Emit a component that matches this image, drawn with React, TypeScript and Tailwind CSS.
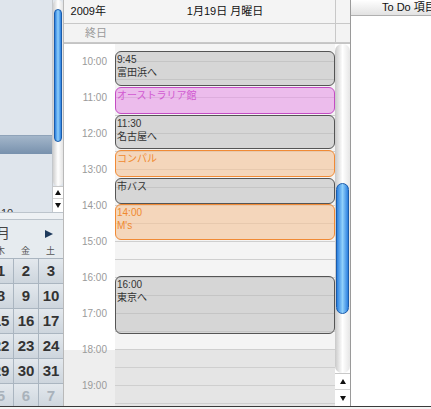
import React from "react";

const font = "font-['Liberation_Sans','Noto_Sans_CJK_JP',sans-serif]";

const EVENT_STYLES = {
  gray: "bg-[rgba(190,190,190,0.55)] border-[#555] text-[#333]",
  pink: "bg-[rgba(230,150,230,0.6)] border-[#c34cc3] text-[#d15ad1]",
  orange: "bg-[rgba(245,198,156,0.65)] border-[#f08a35] text-[#f08a30]",
};

const events = [
  { top: 7, h: 35, kind: "gray", lines: ["9:45", "富田浜へ"] },
  { top: 43, h: 27, kind: "pink", lines: ["オーストラリア館"] },
  { top: 71, h: 34, kind: "gray", lines: ["11:30", "名古屋へ"] },
  { top: 106, h: 27, kind: "orange", lines: ["コンパル"] },
  { top: 134, h: 26, kind: "gray", lines: ["市バス"] },
  { top: 160, h: 36, kind: "orange", lines: ["14:00", "M's"] },
  { top: 232, h: 58, kind: "gray", lines: ["16:00", "東京へ"] },
];

const hours = ["10:00", "11:00", "12:00", "13:00", "14:00", "15:00", "16:00", "17:00", "18:00", "19:00"];

// January 2009, weeks start on Sunday
const weeks = [
  [28, 29, 30, 31, 1, 2, 3],
  [4, 5, 6, 7, 8, 9, 10],
  [11, 12, 13, 14, 15, 16, 17],
  [18, 19, 20, 21, 22, 23, 24],
  [25, 26, 27, 28, 29, 30, 31],
  [1, 2, 3, 4, 5, 6, 7],
];

function UpArrow() {
  return (
    <svg width="6" height="5" viewBox="0 0 6 5">
      <polygon points="3,0 6,5 0,5" fill="#111" />
    </svg>
  );
}

function DownArrow() {
  return (
    <svg width="6" height="5" viewBox="0 0 6 5">
      <polygon points="0,0 6,0 3,5" fill="#111" />
    </svg>
  );
}

function Event({ top, h, kind, lines }) {
  return (
    <div
      className={`absolute left-0 right-0 border rounded-[6px] pl-[1px] pt-[1px] text-[10px] leading-[13px] overflow-hidden ${EVENT_STYLES[kind]}`}
      style={{ top, height: h }}
    >
      {lines.map((l) => (
        <div key={l} className="whitespace-nowrap">{l}</div>
      ))}
    </div>
  );
}

function MiniCalendar() {
  return (
    <div className="flex-1 overflow-hidden bg-[#e6ebef]">
      <div className="w-[175px] ml-[-112px]">
        <div className="h-[24px] pt-[3px] flex items-center">
          <span className="w-[122px] text-right text-[14px] text-[#444]">2009年1月</span>
          <span className="ml-auto mr-[10px] flex">
            <svg width="8" height="8" viewBox="0 0 8 8">
              <polygon points="0,0 8,4 0,8" fill="#1e3a5c" />
            </svg>
          </span>
        </div>
        <div className="h-[14px] flex text-[9px] text-[#555] leading-[14px]">
          {["日", "月", "火", "水", "木", "金", "土"].map((d) => (
            <div key={d} className="w-[25px] text-center">{d}</div>
          ))}
        </div>
        <div className="border-t border-[#aab5c0]">
          {weeks.map((w, wi) => (
            <div key={wi} className="flex h-[25px]">
              {w.map((d, di) => {
                const other = (wi === 0 && d > 20) || (wi === 5 && d < 15);
                return (
                  <div
                    key={di}
                    className={`w-[25px] h-[25px] pt-[1px] border-l border-b border-[#aab5c0] bg-gradient-to-b from-[#e3e8ed] to-[#cdd5dd] flex items-center justify-center text-[15px] font-bold ${other ? "text-[#a9b2bb]" : "text-[#333]"}`}
                  >
                    {d}
                  </div>
                );
              })}
            </div>
          ))}
        </div>
      </div>
    </div>
  );
}

export default function App() {
  return (
    <div className={`w-[431px] h-[409px] flex flex-col overflow-hidden bg-white ${font}`}>
      <div className="flex h-[406px]">
        {/* left: calendar list + mini month */}
        <div className="w-[63px] flex flex-col bg-[#dfe5ec]">
          <div className="h-[212px] flex">
            <div className="w-[52px] flex flex-col">
              <div className="h-[135px]" />
              <div className="h-[19px] border-t border-[#8fa3b9] bg-gradient-to-b from-[#a3b6ca] to-[#7891ad]" />
              <div className="flex-1" />
              <div className="h-[5px] overflow-hidden text-[11px] leading-[12px] text-[#333] pl-[1px]">10</div>
            </div>
            <div className="w-[11px] flex flex-col border-l border-[#c4c8cc]">
              <div className="h-[186px] rounded-t-full rounded-b-full bg-gradient-to-r from-[#cfcfcf] via-[#ffffff] to-[#e4e4e4] pt-[9px]">
                <div className="h-[133px] mx-[1px] rounded-full border border-[#1a5cab] bg-gradient-to-r from-[#2a7fde] via-[#8fd0fb] to-[#2a7fde]" />
              </div>
              <div className="flex-1 flex flex-col bg-white border-t border-[#c8c8c8]">
                <div className="h-[12px] flex items-center justify-center border-b border-[#d4d4d4]">
                  <UpArrow />
                </div>
                <div className="flex-1 flex items-center justify-center">
                  <DownArrow />
                </div>
              </div>
            </div>
          </div>
          <div className="h-[8px] bg-[#eef1f4] border-t border-[#a9b3bd] border-b border-[#bcc4cc]" />
          <MiniCalendar />
        </div>

        {/* day view */}
        <div className="w-[288px] flex flex-col border-l border-r border-l-[#b9b9b9] border-r-[#9a9a9a]">
          <div className="h-[24px] flex border-b border-[#c8c8c8] bg-[#f4f4f4] text-[11px] text-[#111]">
            <div className="w-[51px] flex items-center justify-end pr-[9px]">2009年</div>
            <div className="w-[220px] flex items-center justify-center">1月19日 月曜日</div>
            <div className="flex-1 border-l border-[#c8c8c8]" />
          </div>
          <div className="h-[19px] flex border-b border-[#c8c8c8] bg-[#f3f3f3] text-[11px] text-[#9a9a9a]">
            <div className="w-[51px] flex items-center justify-end pr-[8px]">終日</div>
            <div className="w-[220px]" />
            <div className="flex-1 border-l border-[#c8c8c8]" />
          </div>
          <div className="flex-1 flex border-t border-[#c4c4c4] overflow-hidden">
            <div className="w-[51px] flex flex-col overflow-hidden bg-[linear-gradient(to_bottom,#ffffff_306px,#eeeeee_306px)] text-[10px] text-[#9a9a9a]">
              <div className="h-[11px] shrink-0" />
              {hours.map((h) => (
                <div key={h} className="h-[36px] shrink-0 leading-[14px] text-right pr-[8px]">{h}</div>
              ))}
            </div>
            <div className="w-[220px] relative overflow-hidden">
              {Array.from({ length: 21 }).map((_, i) => (
                <div
                  key={i}
                  className={`h-[18px] border-b border-[#cfcfcf] ${i >= 17 ? "bg-[#e5e5e5]" : "bg-[#f4f4f4]"}`}
                />
              ))}
              {events.map((e) => (
                <Event key={e.top} {...e} />
              ))}
            </div>
            <div className="flex-1 flex flex-col">
              <div className="h-[329px] rounded-t-[7px] rounded-b-[7px] bg-gradient-to-r from-[#c9c9c9] via-[#ffffff] to-[#e6e6e6] pt-[139px]">
                <div className="h-[131px] mx-[1px] rounded-full border border-[#1a5cab] bg-gradient-to-r from-[#2a7fde] via-[#8fd0fb] to-[#2a7fde]" />
              </div>
              <div className="flex-1 flex flex-col bg-white border-t border-[#c8c8c8]">
                <div className="h-[16px] flex items-center justify-center border-b border-[#d4d4d4]">
                  <UpArrow />
                </div>
                <div className="flex-1 flex items-center justify-center">
                  <DownArrow />
                </div>
              </div>
            </div>
          </div>
        </div>

        {/* to do list */}
        <div className="flex-1 flex flex-col overflow-hidden">
          <div className="h-[16px] border-b border-[#b0b0b0] bg-gradient-to-b from-[#ffffff] to-[#e2e2e2] pl-[31px] text-[11px] leading-[15px] text-[#111] whitespace-nowrap">
            To Do 項目
          </div>
          <div className="flex-1 bg-white" />
        </div>
      </div>
      <div className="h-[1px] bg-[#3a3a3a]" />
      <div className="flex-1 bg-[#f4f4f4]" />
    </div>
  );
}
